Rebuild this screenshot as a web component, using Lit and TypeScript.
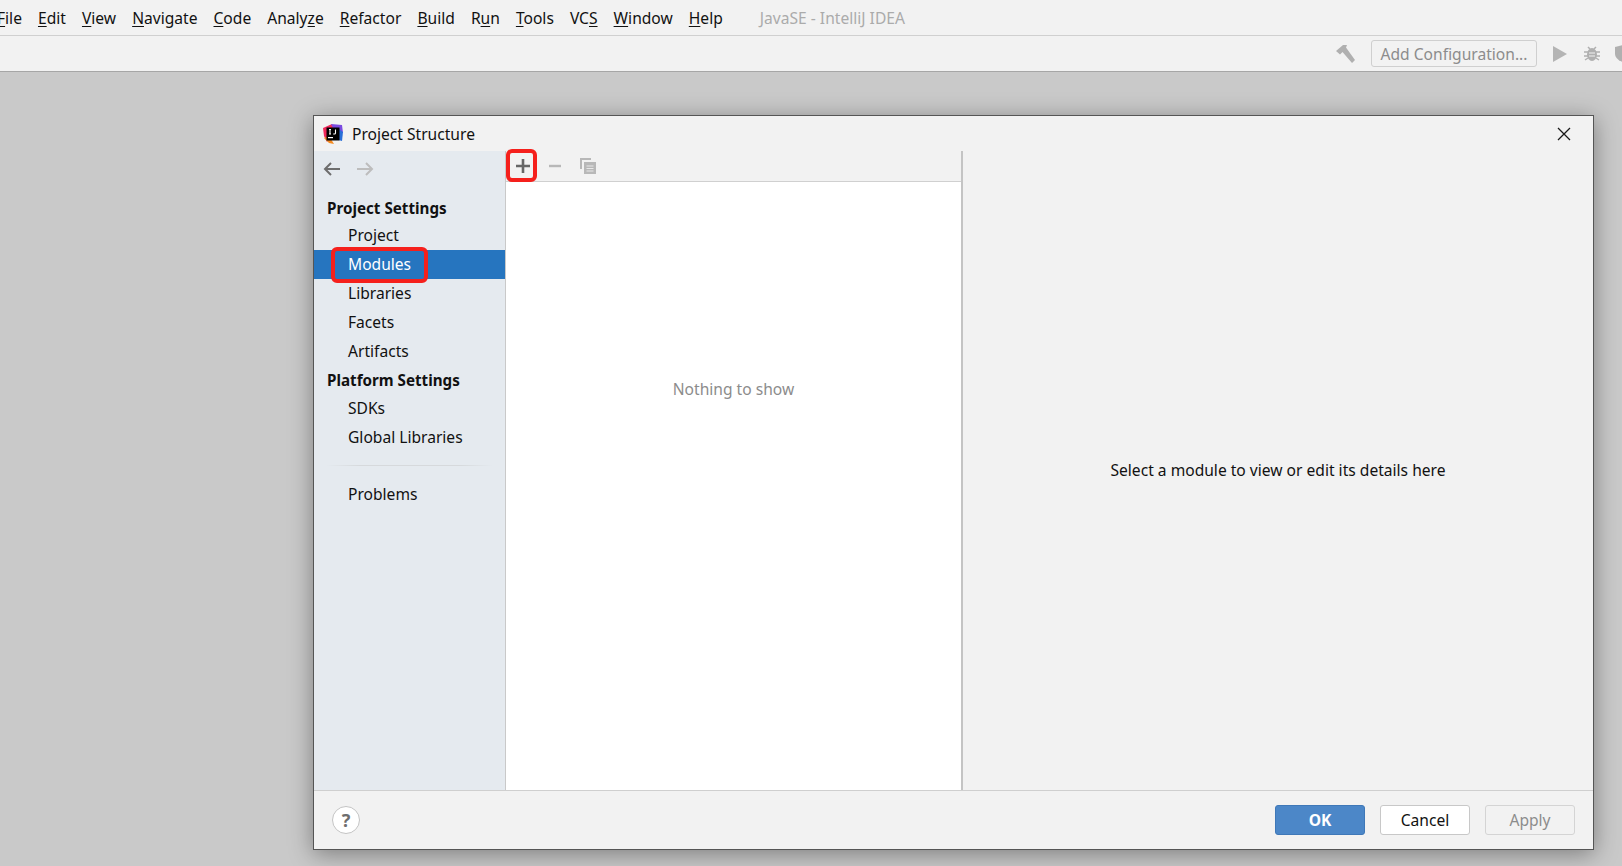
import { LitElement, html, css, svg } from "lit";
import { customElement } from "lit/decorators.js";

const MENU: [string, string, string][] = [
  ["", "F", "ile"], ["", "E", "dit"], ["", "V", "iew"], ["", "N", "avigate"], ["", "C", "ode"],
  ["Analy", "z", "e"], ["", "R", "efactor"], ["", "B", "uild"], ["R", "u", "n"], ["", "T", "ools"],
  ["VC", "S", ""], ["", "W", "indow"], ["", "H", "elp"],
];

@customElement("app-root")
export class AppRoot extends LitElement {
  static styles = css`
    :host { display: block; width: 1622px; height: 866px; overflow: hidden; position: relative; background: #c9c9c9;
      font-family: "Noto Sans", "Open Sans", sans-serif; font-size: 15.6px; color: #111; }
    .menubar { height: 35px; background: #f2f2f2; border-bottom: 1px solid #d0d0d0; display: flex; align-items: center; gap: 16.05px; margin-left: -3px; white-space: nowrap; line-height: 33px; }
    .menubar span { position: relative; top: 1px; }
    .menubar u { text-underline-offset: 2px; text-decoration-thickness: 1px; }
    .app-title { color: #ababab; margin-left: 21px; }
    .toolbar { height: 35px; background: #f2f2f2; border-bottom: 1px solid #a6a6a6; display: flex; align-items: center; justify-content: flex-end; }
    .config { width: 166px; height: 27px; box-sizing: border-box; border: 1px solid #cfcfcf; border-radius: 3px; color: #8c8c8c; display: flex; align-items: center; justify-content: center; margin: 0 16px 0 15px; }
    .tb-icons { display: flex; align-items: center; }
    .window { position: absolute; left: 313px; top: 115px; width: 1281px; height: 735px; box-sizing: border-box; border: 1px solid #555; background: #f2f2f2; box-shadow: 0 4px 22px rgba(0,0,0,.38); display: flex; flex-direction: column; }
    .titlebar { height: 35px; display: flex; align-items: center; padding-left: 9px; gap: 9px; flex: none; }
    .titlebar span { flex: 1; }
    .close { margin-right: 22px; display: block; }
    .body { flex: 1; display: flex; min-height: 0; }
    .side { width: 191px; flex: none; background: #e5eaef; border-right: 1px solid #c9c9c9; display: flex; flex-direction: column; }
    .nav { height: 36px; display: flex; align-items: center; gap: 15px; padding-left: 9px; flex: none; margin-bottom: 7px; }
    .head { font-weight: 700; font-size: 15.2px; height: 27px; line-height: 29px; padding-left: 13px; }
    .head.tall { height: 29px; line-height: 31px; }
    .item { height: 29px; line-height: 29px; padding-left: 34px; position: relative; }
    .item.short { height: 28px; line-height: 28px; }
    .item.sel { background: #2675bf; color: #fff; }
    .hl { position: absolute; left: 17px; top: -3px; width: 97px; height: 36px; box-sizing: border-box; border: 4px solid #f5201c; border-radius: 6px; }
    .sep { height: 1px; margin: 13px 12px 14px 12px; background: linear-gradient(90deg, #e5eaef, #d6d9dc 20%, #d6d9dc 80%, #e5eaef); }
    .mid { width: 455px; flex: none; border-right: 2px solid #c4c4c4; display: flex; flex-direction: column; }
    .mid-tools { height: 30px; flex: none; border-bottom: 1px solid #d0d0d0; display: flex; align-items: center; position: relative; padding-left: 10px; gap: 18px; }
    .hl2 { position: absolute; left: 0; top: -2px; width: 31px; height: 33px; box-sizing: border-box; border: 4px solid #f5201c; border-radius: 6px; }
    .list { flex: 1; background: #fff; display: flex; justify-content: center; padding-top: 197px; color: #8c8c8c; line-height: 20px; }
    .detail { flex: 1; display: flex; align-items: center; justify-content: center; padding-bottom: 2px; }
    .footer { height: 58px; flex: none; border-top: 1px solid #cfcfcf; display: flex; align-items: center; padding: 0 18px; }
    .help { width: 28px; height: 28px; box-sizing: border-box; border-radius: 50%; border: 1px solid #c4c4c4; background: #fff; color: #6e6e6e; font-weight: 700; font-size: 18px; display: flex; align-items: center; justify-content: center; margin-right: auto; }
    .btn { width: 90px; height: 30px; box-sizing: border-box; border-radius: 3px; display: flex; align-items: center; justify-content: center; margin-left: 15px; border: 1px solid #c8c8c8; background: #fff; }
    .btn.ok { background: #4c87c8; border-color: #3f78b8; color: #fff; font-weight: 700; }
    .btn.off { background: #f2f2f2; border-color: #d4d4d4; color: #8c8c8c; }
  `;

  private logo() {
    return svg`<svg width="20" height="20" viewBox="0 0 20 20">
      <path d="M0 4 L9 0 L12 6 L4 18 L1 12Z" fill="#f0285a"/>
      <path d="M8 0 L19 1 L20 9 L12 8Z" fill="#7b4be0"/>
      <path d="M14 4 L20 8 L19 17 L12 15Z" fill="#2a6fd8"/>
      <path d="M1 14 L6 19 L11 20 L6 12Z" fill="#f58a1f"/>
      <rect x="3.5" y="3.5" width="13" height="13" fill="#000"/>
      <rect x="5" y="13" width="5" height="1.2" fill="#fff"/>
      <path d="M6 5.5 H8 M7 5.5 V10 M6 10 H8 M12.5 5.5 V9 Q12.5 10 11.5 10 H10.2" stroke="#fff" stroke-width="1.1" fill="none"/>
    </svg>`;
  }

  render() {
    return html`
      <div class="menubar">
        ${MENU.map(([a, k, b]) => html`<span>${a}<u>${k}</u>${b}</span>`)}
        <span class="app-title">JavaSE - IntelliJ IDEA</span>
      </div>
      <div class="toolbar">
        <svg width="20" height="20" viewBox="0 0 20 20"><path d="M0 7 L7 1 L11 1 L10 3.5 L19 16 L16 19 L6.5 8 L4 10.5Z" fill="#b0b0b0"/></svg>
        <div class="config">Add Configuration...</div>
        <div class="tb-icons">
          <svg width="14" height="16" viewBox="0 0 14 16"><path d="M0 0 L14 8 L0 16Z" fill="#b4b4b4"/></svg>
          <svg style="margin-left:17px" width="16" height="17" viewBox="0 0 16 17"><path d="M4 2 L6 4 M12 2 L10 4 M0 7 H16 M0 11 H16 M1 15 L4 13 M15 15 L12 13" stroke="#b0b0b0" stroke-width="1.5"/><ellipse cx="8" cy="9.5" rx="5" ry="6.5" fill="#b0b0b0"/><path d="M5 8 H11 M5 11 H11" stroke="#f2f2f2" stroke-width="1.2"/></svg>
          <svg style="margin-left:15px;margin-right:-8px" width="15" height="17" viewBox="0 0 15 17"><path d="M0 2 L7.5 0 L15 2 V9 Q15 14 7.5 17 Q0 14 0 9Z" fill="#b0b0b0"/><path d="M7.5 2 L13 3.5 V8 H7.5Z" fill="#f2f2f2"/></svg>
        </div>
      </div>
      <div class="window">
        <div class="titlebar">
          ${this.logo()}
          <span>Project Structure</span>
          <svg class="close" width="14" height="14" viewBox="0 0 14 14"><path d="M1 1 L13 13 M13 1 L1 13" stroke="#1a1a1a" stroke-width="1.3"/></svg>
        </div>
        <div class="body">
          <div class="side">
            <div class="nav">
              <svg width="18" height="14" viewBox="0 0 18 14"><path d="M17 7 H2 M8 1 L2 7 L8 13" stroke="#6e6e6e" stroke-width="2" fill="none"/></svg>
              <svg width="18" height="14" viewBox="0 0 18 14"><path d="M1 7 H16 M10 1 L16 7 L10 13" stroke="#bdbdbd" stroke-width="2" fill="none"/></svg>
            </div>
            <div class="head">Project Settings</div>
            <div class="item">Project</div>
            <div class="item sel">Modules<div class="hl"></div></div>
            <div class="item">Libraries</div>
            <div class="item">Facets</div>
            <div class="item short">Artifacts</div>
            <div class="head tall">Platform Settings</div>
            <div class="item">SDKs</div>
            <div class="item">Global Libraries</div>
            <div class="sep"></div>
            <div class="item">Problems</div>
          </div>
          <div class="mid">
            <div class="mid-tools">
              <div class="hl2"></div>
              <svg width="14" height="14" viewBox="0 0 14 14"><path d="M7 0 V14 M0 7 H14" stroke="#666" stroke-width="2.6"/></svg>
              <svg width="14" height="14" viewBox="0 0 14 14"><path d="M1 7 H13" stroke="#b8b8b8" stroke-width="2.4"/></svg>
              <svg width="16" height="16" viewBox="0 0 16 16"><path d="M1 11 V1 H11" stroke="#b8b8b8" stroke-width="2" fill="none"/><rect x="4" y="4" width="12" height="12" fill="#b8b8b8"/><path d="M6.5 8 H13.5 M6.5 10.5 H13.5 M6.5 13 H13.5" stroke="#e8e8e8" stroke-width="1"/></svg>
            </div>
            <div class="list">Nothing to show</div>
          </div>
          <div class="detail">Select a module to view or edit its details here</div>
        </div>
        <div class="footer">
          <div class="help">?</div>
          <div class="btn ok">OK</div>
          <div class="btn">Cancel</div>
          <div class="btn off">Apply</div>
        </div>
      </div>
    `;
  }
}
